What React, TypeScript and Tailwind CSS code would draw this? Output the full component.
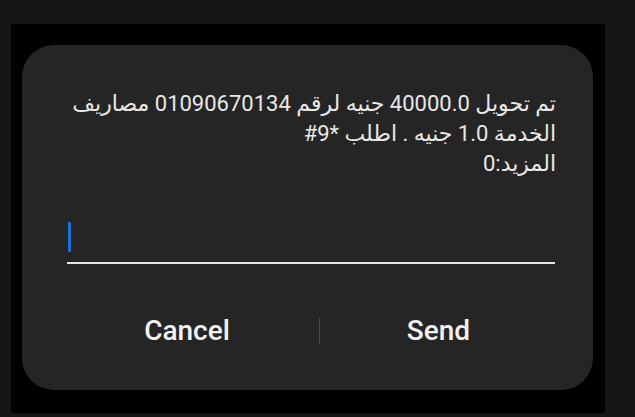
import React from "react";

export default function App() {
  const font = { fontFamily: "Roboto, 'DejaVu Sans', sans-serif" };
  return (
    <div className="w-[635px] h-[417px] bg-[#151515] pt-[24px] pl-[11px] overflow-hidden" style={font}>
      <div className="w-[594px] h-[389px] bg-black pt-[21px] pl-[11px]">
        <div className="w-[571px] h-[345px] rounded-[32px] bg-[#252525] flex flex-col">
          <div dir="rtl" className="pt-[44px] pr-[37px] pl-[40px] text-[#e8e8e8] text-[22px] leading-[30px] text-right">
            <div className="whitespace-nowrap">تم تحويل 40000.0 جنيه لرقم 01090670134 مصاريف</div>
            <div className="whitespace-nowrap">الخدمة 1.0 جنيه . اطلب *9#</div>
            <div className="whitespace-nowrap">المزيد:0</div>
          </div>
          <div className="mt-[43px] pl-[45px] pr-[38px]">
            <div className="h-[30px] flex items-center">
              <div className="w-[3px] h-[30px] bg-[#1f6fe0] rounded-[1px] ml-[1px]" />
            </div>
            <div className="mt-[10px] h-[2px] bg-[#e6e6e6]" />
          </div>
          <div className="mt-[50px] flex items-center h-[34px]">
            <div className="w-[297px] text-center text-[28px] font-medium text-[#f2f2f2] pl-[33px]">Cancel</div>
            <div className="w-[1px] h-[26px] bg-[#4a4a4a]" />
            <div className="flex-1 text-center text-[28px] font-medium text-[#f2f2f2] pr-[36px]">Send</div>
          </div>
        </div>
      </div>
    </div>
  );
}
